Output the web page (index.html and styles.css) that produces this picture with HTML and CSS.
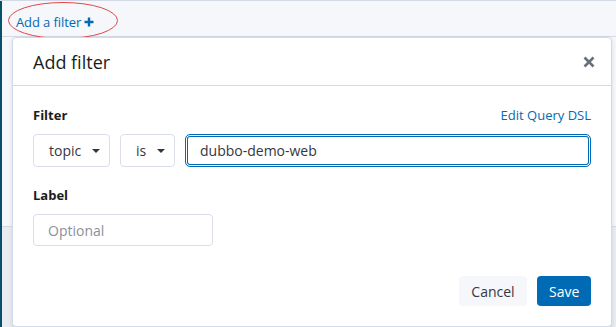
FILE: index.html
```html
<!DOCTYPE html>
<html lang="en">

<head>
  <meta charset="utf-8" />
  <title>Add filter</title>
  <link rel="stylesheet" href="styles.css">
</head>

<body>
  <div class="page">
    <div class="side-nav"></div>
    <div class="main">
      <div class="filter-bar">
        <a class="add-filter" href="#">Add a filter
          <svg class="plus" viewBox="0 0 10 10" width="10" height="10">
            <path d="M5 0.5v9M0.5 5h9" stroke="#006bb4" stroke-width="2.4" />
          </svg>
        </a>
      </div>
      <div class="content">
        <div class="content-top"></div>
        <div class="content-rest"></div>
      </div>
    </div>
  </div>

  <!-- Annotation round the link -->
  <svg class="mark" width="112" height="40" viewBox="0 0 112 40">
    <ellipse cx="56" cy="19.5" rx="54.5" ry="18" fill="none" stroke="#e0474c" stroke-width="1" />
  </svg>

  <!-- Popover -->
  <div class="popover">
    <div class="popover-header">
      <h3>Add filter</h3>
      <button class="close" aria-label="Close">
        <svg viewBox="0 0 12 12" width="12" height="12">
          <path d="M1.5 1.5l9 9M10.5 1.5l-9 9" stroke="#69707d" stroke-width="2.6" />
        </svg>
      </button>
    </div>

    <div class="popover-body">
      <div class="field-head">
        <label>Filter</label>
        <a href="#" class="dsl-link">Edit Query DSL</a>
      </div>
      <div class="filter-row">
        <div class="select select-field">topic <span class="caret"></span></div>
        <div class="select select-op">is <span class="caret"></span></div>
        <div class="text-input focused">dubbo-demo-web</div>
      </div>

      <div class="field-head label-head">
        <label>Label</label>
      </div>
      <div class="text-input label-input placeholder">Optional</div>
    </div>

    <div class="popover-footer">
      <button class="btn btn-empty">Cancel</button>
      <button class="btn btn-fill">Save</button>
    </div>
  </div>
</body>

</html>
```

FILE: styles.css
```css
/* Global Reset */
* {
  margin: 0;
  padding: 0;
  box-sizing: border-box;
}

body {
  font-family: 'Open Sans', 'Noto Sans', sans-serif;
  background-color: #fff;
  color: #343741;
  width: 616px;
  height: 327px;
  overflow: hidden;
  position: relative;
}

/* Page behind the popover */
.page {
  display: flex;
  height: 100%;
  border-top: 1px solid #d3dae6;
}

.side-nav {
  width: 2px;
  background-color: #07506c;
}

.main {
  flex: 1;
  display: flex;
  flex-direction: column;
}

.filter-bar {
  height: 36px;
  background-color: #f5f7fa;
  border-bottom: 1px solid #d3dae6;
  padding: 9px 0 0 14px;
}

.add-filter {
  color: #006bb4;
  text-decoration: none;
  font-size: 13px;
  display: inline-flex;
  align-items: center;
  gap: 3px;
  letter-spacing: -0.1px;
}

.content {
  flex: 1;
  display: flex;
  flex-direction: column;
}

.content-top {
  height: 190px;
  background-color: #f5f7fa;
  border-bottom: 1px solid #d3dae6;
}

.content-rest {
  flex: 1;
  background-color: #e9edf2;
}

.mark {
  position: absolute;
  left: 7px;
  top: 1px;
}

/* Popover */
.popover {
  position: absolute;
  left: 12px;
  top: 37px;
  width: 600px;
  height: 290px;
  background-color: #fff;
  border: 1px solid #d3dae6;
  border-radius: 4px;
  box-shadow: 0 2px 4px rgba(0, 0, 0, 0.12);
  display: flex;
  flex-direction: column;
}

.popover-header {
  height: 48px;
  display: flex;
  align-items: center;
  justify-content: space-between;
  padding: 0 16px 0 20px;
  border-bottom: 1px solid #d3dae6;
}

.popover-header h3 {
  font-size: 18px;
  font-weight: 400;
  color: #1a1c21;
}

.close {
  background: none;
  border: none;
  display: flex;
  padding: 0;
}

.popover-body {
  padding: 20px 20px 0;
  flex: 1;
}

.field-head {
  display: flex;
  justify-content: space-between;
  align-items: baseline;
  margin-bottom: 10px;
}

.field-head label {
  font-size: 13px;
  font-weight: 700;
  color: #1a1c21;
}

.dsl-link {
  color: #006bb4;
  text-decoration: none;
  font-size: 13px;
}

.filter-row {
  display: flex;
  gap: 10px;
}

.select {
  height: 33px;
  border: 1px solid #d9dee8;
  border-radius: 4px;
  font-size: 14px;
  display: flex;
  align-items: center;
  padding: 0 10px 0 15px;
  gap: 11px;
}

.select-field {
  width: 77px;
}

.select-op {
  width: 55px;
}

.caret {
  width: 0;
  height: 0;
  border-left: 4px solid transparent;
  border-right: 4px solid transparent;
  border-top: 4px solid #343741;
}

.text-input {
  height: 33px;
  border: 1px solid #d9dee8;
  border-radius: 4px;
  font-size: 14px;
  display: flex;
  align-items: center;
  padding: 0 14px;
}

.focused {
  flex: 1;
  border-color: #006bb4;
  border-radius: 5px;
  box-shadow: inset 0 0 0 1px #fff, inset 0 0 0 2px #006bb4;
}

.label-head {
  margin-top: 19px;
  margin-bottom: 10px;
}

.label-input {
  width: 180px;
  height: 32px;
}

.placeholder {
  color: #8b909a;
}

.popover-footer {
  display: flex;
  justify-content: flex-end;
  gap: 10px;
  padding: 0 20px 20px;
}

.btn {
  font-family: inherit;
  font-size: 14px;
  height: 30px;
  border: none;
  border-radius: 4px;
  padding: 0 12px;
}

.btn-empty {
  background-color: #f5f7fa;
  color: #343741;
  width: 68px;
}

.btn-fill {
  background-color: #006bb4;
  color: #fff;
  width: 54px;
}
```
